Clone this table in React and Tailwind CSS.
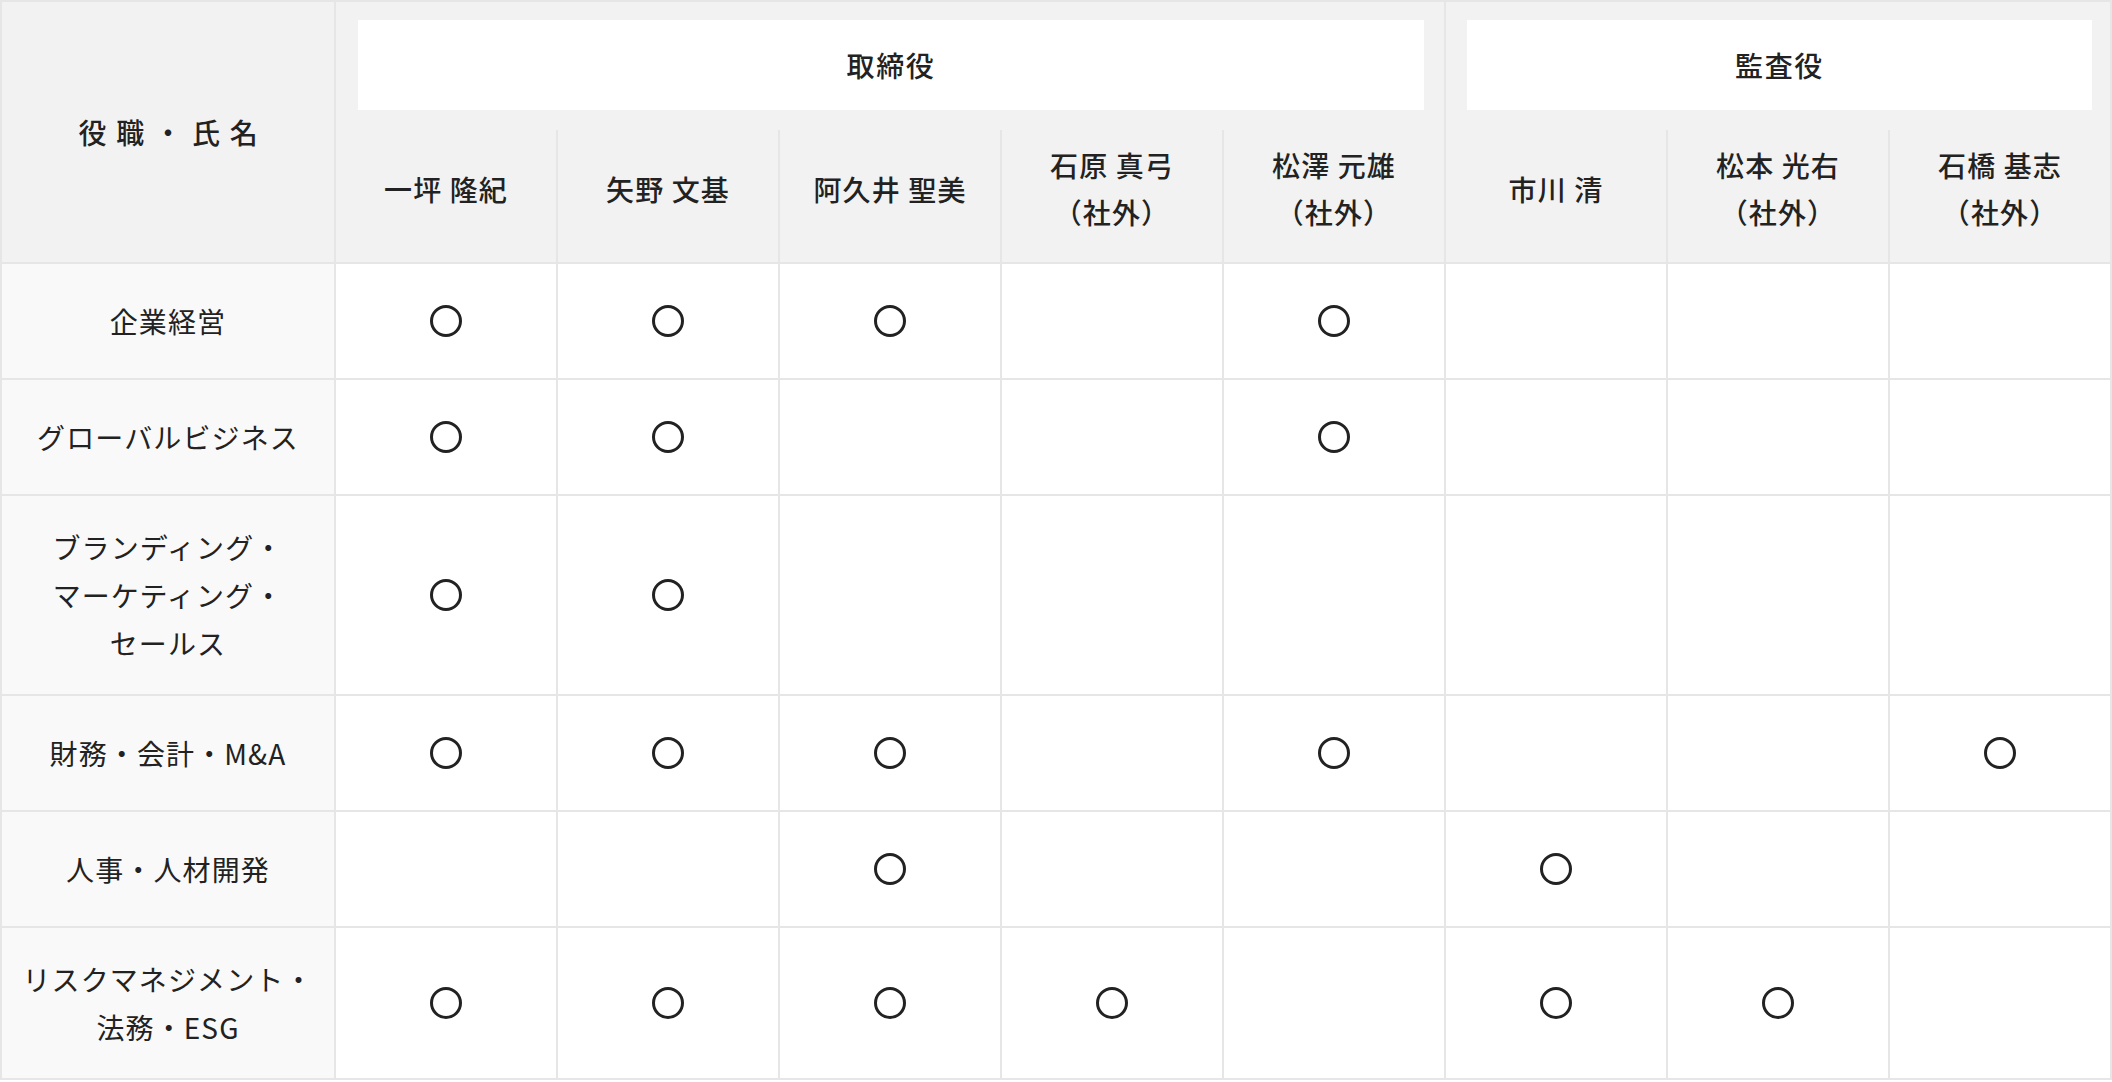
import React from 'react';

const DIRECTORS = [
  { name: '一坪 隆紀' },
  { name: '矢野 文基' },
  { name: '阿久井 聖美' },
  { name: '石原 真弓', outside: true },
  { name: '松澤 元雄', outside: true },
];

const AUDITORS = [
  { name: '市川 清' },
  { name: '松本 光右', outside: true },
  { name: '石橋 基志', outside: true },
];

const SKILLS = [
  { label: ['企業経営'], marks: [1, 1, 1, 0, 1, 0, 0, 0] },
  { label: ['グローバルビジネス'], marks: [1, 1, 0, 0, 1, 0, 0, 0] },
  { label: ['ブランディング・', 'マーケティング・', 'セールス'], marks: [1, 1, 0, 0, 0, 0, 0, 0] },
  { label: ['財務・会計・M&A'], marks: [1, 1, 1, 0, 1, 0, 0, 1] },
  { label: ['人事・人材開発'], marks: [0, 0, 1, 0, 0, 1, 0, 0] },
  { label: ['リスクマネジメント・', '法務・ESG'], marks: [1, 1, 1, 1, 0, 1, 1, 0] },
];

const Mark = () => (
  <span className="inline-block w-[32px] h-[32px] rounded-full border-[3px] border-[#222] align-middle" />
);

const NameCell = ({ member }) => (
  <th className="border-x-2 border-b-2 border-[#e6e6e6] bg-[#f2f2f2] h-[133px] pb-[14px] align-middle font-medium text-[28px] leading-[47px] tracking-[0.04em]">
    <div>{member.name}</div>
    {member.outside && <div>（社外）</div>}
  </th>
);

export default function App() {
  return (
    <div className="bg-white w-[2112px] min-h-[1082px] text-[#222]" style={{ fontFamily: '"Noto Sans CJK JP", "Noto Sans", sans-serif' }}>
      <table className="w-[2110px] table-fixed border-collapse border-2 border-[#e6e6e6]">
        <colgroup>
          <col className="w-[334px]" />
          {[...Array(8)].map((_, i) => (
            <col key={i} className="w-[222px]" />
          ))}
        </colgroup>
        <thead>
          <tr>
            <th
              rowSpan={2}
              className="border-2 border-[#e6e6e6] bg-[#f2f2f2] pl-[10px] align-middle font-medium text-[28px] tracking-[0.35em]"
            >
              役職・氏名
            </th>
            <th colSpan={5} className="border-x-2 border-[#e6e6e6] bg-[#f2f2f2] pt-[18px] pb-[20px] pl-[22px] pr-[20px]">
              <div className="bg-white h-[90px] flex items-center justify-center font-medium text-[28px] tracking-[0.06em]">
                取締役
              </div>
            </th>
            <th colSpan={3} className="border-x-2 border-[#e6e6e6] bg-[#f2f2f2] pt-[18px] pb-[20px] pl-[21px] pr-[18px]">
              <div className="bg-white h-[90px] flex items-center justify-center font-medium text-[28px] tracking-[0.06em]">
                監査役
              </div>
            </th>
          </tr>
          <tr>
            {DIRECTORS.map((m) => (
              <NameCell key={m.name} member={m} />
            ))}
            {AUDITORS.map((m) => (
              <NameCell key={m.name} member={m} />
            ))}
          </tr>
        </thead>
        <tbody>
          {SKILLS.map((row) => (
            <tr key={row.label.join('')}>
              <th className="border-2 border-[#e6e6e6] bg-[#f9f9f9] py-[27px] h-[116px] align-middle font-normal text-[28px] leading-[48px] tracking-[0.04em]">
                {row.label.map((line) => (
                  <div key={line}>{line}</div>
                ))}
              </th>
              {row.marks.map((m, i) => (
                <td key={i} className="border-2 border-[#e6e6e6] bg-white text-center align-middle">
                  {m ? <Mark /> : null}
                </td>
              ))}
            </tr>
          ))}
        </tbody>
      </table>
    </div>
  );
}
